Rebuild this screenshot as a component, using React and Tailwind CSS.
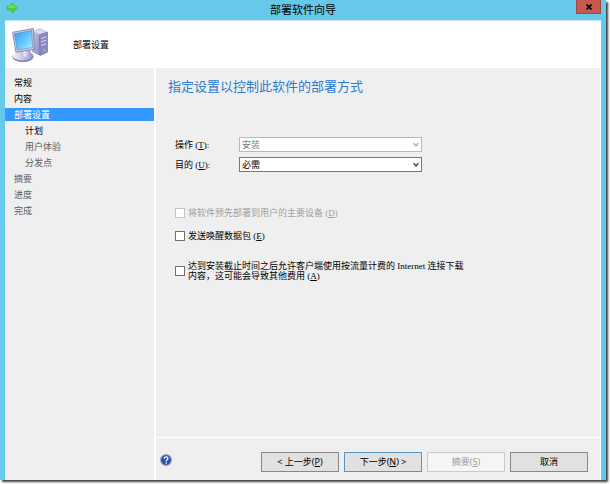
import React, { useState } from "react";

const UI_FONT = "font-['Noto_Sans','Noto_Sans_CJK_SC',sans-serif]";
const FORM_FONT = "font-['Liberation_Serif','Noto_Sans_CJK_SC',serif]";

const STEPS = [
  { name: "常规", state: "done" },
  { name: "内容", state: "done" },
  { name: "部署设置", state: "current" },
  { name: "计划", state: "done", child: true },
  { name: "用户体验", state: "todo", child: true },
  { name: "分发点", state: "todo", child: true },
  { name: "摘要", state: "todo" },
  { name: "进度", state: "todo" },
  { name: "完成", state: "todo" },
];

const STEP_COLORS = {
  done: "text-black",
  current: "bg-[#3399ff] text-white",
  todo: "text-[#5c5c5c]",
};

const ArrowIcon = () => (
  <svg className="w-3 h-3" viewBox="0 0 12 12" aria-hidden="true">
    <path d="M.7 4H6V1l5.4 5L6 11V8H.7L2 6z" fill="#4fd12b" stroke="#46b03a" strokeWidth=".7" strokeLinejoin="round" />
    <path d="M2 5h5V3.4L9.5 6" fill="none" stroke="#a2f27c" strokeWidth=".8" />
  </svg>
);

const ComputerIcon = () => (
  <svg className="w-9 h-9" viewBox="0 0 36 36" aria-hidden="true">
    <defs>
      <linearGradient id="screen" x1="0" y1="0" x2="1" y2="1">
        <stop offset="0" stopColor="#2f9df4" />
        <stop offset=".55" stopColor="#69c8fd" />
        <stop offset="1" stopColor="#b5f0ff" />
      </linearGradient>
      <linearGradient id="tower" x1="0" y1="0" x2="1" y2="1">
        <stop offset="0" stopColor="#c3c4e6" />
        <stop offset="1" stopColor="#8d8cc0" />
      </linearGradient>
      <linearGradient id="stand" x1="0" y1="0" x2="1" y2="0">
        <stop offset="0" stopColor="#f6f6fc" />
        <stop offset="1" stopColor="#9795c4" />
      </linearGradient>
    </defs>
    <path d="M20 4.5l8-2.7 7.5 3.4-8 2.6z" fill="#dcdcf0" stroke="#9c9bc8" strokeWidth=".5" />
    <path d="M20 4.8l8 2.8v21l-8-3.6z" fill="url(#tower)" />
    <path d="M27.5 7.8l8-2.6v20l-7.5 3.4z" fill="#8a88be" stroke="#6b69a4" strokeWidth=".6" />
    <path d="M29 11.5l5-1.8M29 15l5-1.8M29 18.5l5-1.8" stroke="#d5d5ee" strokeWidth="1.2" />
    <circle cx="32.4" cy="23.4" r="1.2" fill="#75dc58" />
    <ellipse cx="11" cy="29.6" rx="10.6" ry="5.4" fill="#8482ad" />
    <ellipse cx="10.8" cy="28.6" rx="10.2" ry="4.9" fill="url(#stand)" />
    <path d="M11 24l7-2 1 7c-2 2-6 2-8 0z" fill="url(#stand)" stroke="#a3a1ca" strokeWidth=".4" />
    <path d="M.5 5.3L21.3 1.5l1 20.8L3.9 25.2z" fill="#cecee3" stroke="#7977a6" strokeWidth=".8" strokeLinejoin="round" />
    <path d="M2.4 6.8L19.7 3.5l.9 17L5.3 23z" fill="url(#screen)" stroke="#4d77bb" strokeWidth=".5" />
  </svg>
);

const HelpIcon = () => (
  <svg className="w-3 h-3" viewBox="0 0 12 12" aria-hidden="true">
    <circle cx="6" cy="6" r="5.4" fill="#2450b8" stroke="#9a9fac" strokeWidth="1.2" />
    <path d="M4.2 4.7c0-2.5 3.8-2.4 3.7-.2C7.9 5.9 6.1 5.7 6.1 7.4" fill="none" stroke="#fff" strokeWidth="1.3" />
    <circle cx="6.1" cy="9.1" r=".8" fill="#fff" />
  </svg>
);

const SelectRow = ({ id, label, hotkey, options, value, onChange, disabled }) => (
  <div className="flex items-center">
    <label htmlFor={id} className="w-16 text-black">
      {label} (<u>{hotkey}</u>):
    </label>
    <div className="relative w-[183px]">
      <select
        id={id}
        value={value}
        onChange={(e) => onChange(e.target.value)}
        disabled={disabled}
        className="block w-full h-[15px] appearance-none border border-[#777] bg-white pl-0.5 leading-3 text-black opacity-100 disabled:border-[#b9b9b9] disabled:text-[#7a7a7a]"
      >
        {options.map((o) => (
          <option key={o}>{o}</option>
        ))}
      </select>
      <svg
        className={`absolute right-[3px] top-[5px] w-1.5 h-1.5 pointer-events-none ${disabled ? "text-[#aaa]" : "text-[#333]"}`}
        viewBox="0 0 6 6"
        aria-hidden="true"
      >
        <path d="M.6 1.2L3 4l2.4-2.8" fill="none" stroke="currentColor" strokeWidth="1.3" />
      </svg>
    </div>
  </div>
);

const CheckRow = ({ id, checked, onChange, disabled, children }) => (
  <div className="flex items-center gap-[3px]">
    <input
      id={id}
      type="checkbox"
      checked={checked}
      onChange={(e) => onChange(e.target.checked)}
      disabled={disabled}
      className="w-2.5 h-2.5 shrink-0 appearance-none border border-[#707070] bg-white checked:bg-[#3399ff] disabled:border-[#c0c4c4]"
    />
    <label htmlFor={id} className={`max-w-[284px] leading-[10px] ${disabled ? "text-[#a0a0a0]" : "text-black"}`}>
      {children}
    </label>
  </div>
);

const WizardButton = ({ primary, ...props }) => (
  <button
    type="button"
    className={`w-[78px] h-5 border text-[9px] leading-3 text-black bg-[#e1e1e1] disabled:bg-[#f5f5f5] disabled:border-[#cacaca] disabled:text-[#a0a0a0] ${primary ? "border-[#5794bf]" : "border-[#888]"}`}
    {...props}
  />
);

const App = () => {
  const [purpose, setPurpose] = useState("必需");
  const [wakeUp, setWakeUp] = useState(false);
  const [metered, setMetered] = useState(false);

  return (
    <div className={`min-h-screen flex bg-white pr-1 pb-1 overflow-hidden ${UI_FONT}`}>
      <div className="flex-1 flex flex-col bg-[#66c9e9] px-[5px] shadow-[2px_2px_2px_rgba(0,0,0,0.75)]">
        {/* Title bar */}
        <div className="h-5 grid grid-cols-[1fr_auto_1fr] items-center">
          <div className="pb-1 pl-px">
            <ArrowIcon />
          </div>
          <h1 className="text-[11px] leading-4 text-black">部署软件向导</h1>
          <button
            type="button"
            aria-label="关闭"
            className="justify-self-end self-start flex items-center justify-center w-[25px] h-3.5 border border-t-0 border-[#9e473f] bg-[#c75a50]"
          >
            <svg className="w-1.5 h-1.5" viewBox="0 0 6 6" aria-hidden="true">
              <path d="M.5.5l5 5M5.5.5l-5 5" stroke="#000" strokeWidth="1.6" />
            </svg>
          </button>
        </div>

        {/* Page banner */}
        <div className="h-12 flex items-center gap-[25px] bg-white border-t border-[#c5e3ee] pl-[7px]">
          <ComputerIcon />
          <h2 className="text-[9px] leading-3 text-black">部署设置</h2>
        </div>

        <div className="flex-1 flex bg-[#efefef]">
          {/* Steps */}
          <nav className="w-[151px] shrink-0 border-r-2 border-white pt-2">
            <ol className="flex flex-col gap-[3px]">
              {STEPS.map((step) => (
                <li
                  key={step.name}
                  aria-current={step.state === "current" ? "step" : undefined}
                  className={`h-[13px] text-[9px] leading-[13px] ${step.child ? "pl-5" : "pl-[9px]"} ${STEP_COLORS[step.state]}`}
                >
                  {step.name}
                </li>
              ))}
            </ol>
          </nav>

          <div className="flex-1 flex flex-col border-r border-white">
            <main className="flex-1 pt-2 pl-3">
              <h3 className="text-[13px] leading-5 text-[#2b7bd0]">指定设置以控制此软件的部署方式</h3>

              <form className={`pl-[7px] pt-[41px] text-[9px] leading-3 ${FORM_FONT}`}>
                <div className="flex flex-col gap-[5px]">
                  <SelectRow id="action" label="操作" hotkey="T" options={["安装", "卸载"]} value="安装" onChange={() => {}} disabled />
                  <SelectRow id="purpose" label="目的" hotkey="U" options={["必需", "可用"]} value={purpose} onChange={setPurpose} />
                </div>

                <div className="flex flex-col pt-9">
                  <CheckRow id="predeploy" checked={false} onChange={() => {}} disabled>
                    将软件预先部署到用户的主要设备 (<u>D</u>)
                  </CheckRow>
                  <div className="pt-[13px] pb-5">
                    <CheckRow id="wakeup" checked={wakeUp} onChange={setWakeUp}>
                      发送唤醒数据包 (<u>E</u>)
                    </CheckRow>
                  </div>
                  <CheckRow id="metered" checked={metered} onChange={setMetered}>
                    达到安装截止时间之后允许客户端使用按流量计费的 Internet 连接下载内容，这可能会导致其他费用 (<u>A</u>)
                  </CheckRow>
                </div>
              </form>
            </main>

            {/* Footer buttons */}
            <footer className="flex items-start border-t border-white pt-3.5 pb-2 pl-1 pr-3">
              <button type="button" aria-label="帮助" className="pt-0.5">
                <HelpIcon />
              </button>
              <div className="flex-1 flex justify-end gap-[5px]">
                <WizardButton>
                  &lt; 上一步(<u>P</u>)
                </WizardButton>
                <WizardButton primary>
                  下一步(<u>N</u>) &gt;
                </WizardButton>
                <WizardButton disabled>
                  摘要(<u>S</u>)
                </WizardButton>
                <WizardButton>取消</WizardButton>
              </div>
            </footer>
          </div>
        </div>
      </div>
    </div>
  );
};

export default App;
